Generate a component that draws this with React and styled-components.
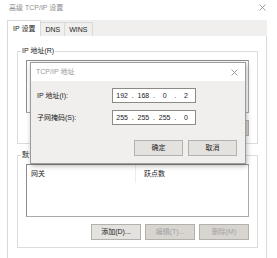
import styled, { createGlobalStyle } from "styled-components";

const GlobalStyle = createGlobalStyle`
  body { margin: 0; background: #fff; }
  * { box-sizing: border-box; }
`;

const Window = styled.div`
  position: relative;
  width: 277px;
  height: 258px;
  overflow: hidden;
  background: #fff;
  font-family: "Liberation Sans", "Noto Sans CJK SC", sans-serif;
  font-size: 7px;
  line-height: 8px;
  color: #1c1c1c;
`;

const TitleBar = styled.div`
  height: 15px;
  display: flex;
  align-items: center;
  justify-content: space-between;
  padding: 0 11px 0 9px;
  color: #8e8e8e;
`;

const TabStrip = styled.div`
  margin: 5px 10px 0 7px;
  height: 16px;
  display: flex;
  align-items: flex-end;
  background: #f0efed;
`;

const Tab = styled.div`
  height: ${(p) => (p.$active ? 16 : 14)}px;
  padding: 0 ${(p) => (p.$active ? 5 : 4)}px;
  margin-right: -1px;
  display: flex;
  align-items: center;
  border: 1px solid #d9d9d9;
  border-bottom: none;
  background: ${(p) => (p.$active ? "#fff" : "#f0efed")};
  position: relative;
  z-index: ${(p) => (p.$active ? 1 : 0)};
`;

const Panel = styled.div`
  margin: 0 10px 0 7px;
  height: 240px;
  border: 1px solid #dadada;
  border-top: none;
  padding: 11px 8px 0 9px;
  background: #fff;
`;

const Group = styled.fieldset`
  margin: ${(p) => (p.$first ? 0 : "7px 0 0")};
  padding: 5px 8px 7px 8px;
  border: 1px solid #dcdcdc;
  min-width: 0;
`;

const Legend = styled.legend`
  margin-left: -5px;
  padding: 0 1px;
  font-size: 7px;
  line-height: 8px;
`;

const ListBox = styled.div`
  height: 53px;
  border: 1px solid #8d8d8d;
  border-color: #8d8d8d #a9a9a9 #a9a9a9 #8d8d8d;
  background: #fff;
`;

const ListHeader = styled.div`
  display: flex;
  height: 18px;
`;

const HeaderCell = styled.div`
  flex: ${(p) => (p.$first ? "0 0 109px" : "1 1 auto")};
  padding: 5px 0 0 ${(p) => (p.$first ? 4 : 8)}px;
  border-right: 1px solid ${(p) => (p.$first ? "#ececec" : "transparent")};
`;

const ButtonRow = styled.div`
  display: flex;
  justify-content: flex-end;
  gap: ${(p) => p.$gap || 4}px;
  margin-top: ${(p) => (p.$auto ? "auto" : "7px")};
`;

const Button = styled.div`
  width: ${(p) => p.$w || 50}px;
  height: 16px;
  display: flex;
  align-items: center;
  justify-content: center;
  border: 1px solid #b4b1ac;
  background: ${(p) => (p.$disabled ? "#d8d5d0" : "#e4e2de")};
  color: ${(p) => (p.$disabled ? "#a3a3a3" : "#1c1c1c")};
`;

const Dialog = styled.div`
  position: absolute;
  left: 30px;
  top: 62px;
  width: 216px;
  height: 102px;
  display: flex;
  flex-direction: column;
  border: 1px solid #a09d99;
  box-shadow: 1px 2px 5px rgba(0, 0, 0, 0.28);
  z-index: 5;
`;

const DialogTitle = styled.div`
  height: 18px;
  display: flex;
  align-items: center;
  justify-content: space-between;
  padding: 0 7px 0 5px;
  background: #fff;
  color: #9a9a9a;
`;

const DialogBody = styled.div`
  flex: 1;
  display: flex;
  flex-direction: column;
  padding: 7px 8px 7px 6px;
  background: #f0efed;
`;

const Form = styled.div`
  display: grid;
  grid-template-columns: 75px 84px;
  row-gap: 7px;
  align-items: center;
`;

const IpField = styled.div`
  height: 15px;
  display: flex;
  align-items: center;
  border: 1px solid #8e8b87;
  background: #fff;
`;

const Octet = styled.span`
  flex: 1;
  text-align: center;
`;

const Dot = styled.span`
  width: 3px;
  text-align: center;
`;

const Close = ({ color = "#777" }) => (
  <svg width="7" height="7" viewBox="0 0 7 7">
    <path d="M0.5 0.5L6.5 6.5M6.5 0.5L0.5 6.5" stroke={color} strokeWidth="0.8" fill="none" />
  </svg>
);

const Ip = ({ parts }) => (
  <IpField>
    {parts.flatMap((p, i) =>
      i > 0 ? [<Dot key={"d" + i}>.</Dot>, <Octet key={i}>{p}</Octet>] : [<Octet key={i}>{p}</Octet>]
    )}
  </IpField>
);

const App = () => {
  return (
    <Window>
      <GlobalStyle />
      <TitleBar>
        <span>高级 TCP/IP 设置</span>
        <Close color="#888" />
      </TitleBar>
      <TabStrip>
        <Tab $active>IP 设置</Tab>
        <Tab>DNS</Tab>
        <Tab>WINS</Tab>
      </TabStrip>
      <Panel>
        <Group $first>
          <Legend>IP 地址(R)</Legend>
          <ListBox />
          <ButtonRow>
            <Button>添加(A)...</Button>
            <Button $disabled>编辑(E)...</Button>
            <Button $disabled>删除(V)</Button>
          </ButtonRow>
        </Group>
        <Group>
          <Legend>默认网关(F):</Legend>
          <ListBox>
            <ListHeader>
              <HeaderCell $first>网关</HeaderCell>
              <HeaderCell>跃点数</HeaderCell>
            </ListHeader>
          </ListBox>
          <ButtonRow>
            <Button>添加(D)...</Button>
            <Button $disabled>编辑(T)...</Button>
            <Button $disabled>删除(M)</Button>
          </ButtonRow>
        </Group>
      </Panel>

      <Dialog>
        <DialogTitle>
          <span>TCP/IP 地址</span>
          <Close color="#8a8a8a" />
        </DialogTitle>
        <DialogBody>
          <Form>
            <span>IP 地址(I):</span>
            <Ip parts={["192", "168", "0", "2"]} />
            <span>子网掩码(S):</span>
            <Ip parts={["255", "255", "255", "0"]} />
          </Form>
          <ButtonRow $auto $gap={5}>
            <Button $w={49}>确定</Button>
            <Button $w={49}>取消</Button>
          </ButtonRow>
        </DialogBody>
      </Dialog>
    </Window>
  );
};

export default App;
